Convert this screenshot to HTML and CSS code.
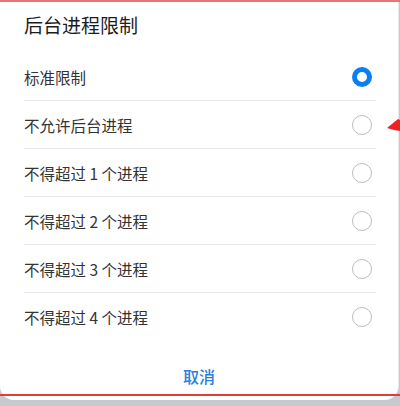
FILE: index.html
```html
<!DOCTYPE html>
<html lang="zh">
<head>
<meta charset="utf-8">
<link rel="stylesheet" href="styles.css">
</head>
<body>
<div class="card">
  <div class="title">后台进程限制</div>
  <div class="list">
    <div class="row"><span>标准限制</span><span class="radio on"></span></div>
    <div class="row"><span>不允许后台进程</span><span class="radio"></span></div>
    <div class="row"><span>不得超过 1 个进程</span><span class="radio"></span></div>
    <div class="row"><span>不得超过 2 个进程</span><span class="radio"></span></div>
    <div class="row"><span>不得超过 3 个进程</span><span class="radio"></span></div>
    <div class="row"><span>不得超过 4 个进程</span><span class="radio"></span></div>
  </div>
  <div class="cancel">取消</div>
</div>
<div class="mark"></div>
<svg class="arrow" width="16" height="18" viewBox="0 0 16 18"><polygon points="3,12 14,3 16,4 16,15 10,14" fill="#ee2222"/></svg>
</body>
</html>
```
FILE: styles.css
```css
html, body {
  margin: 0;
  padding: 0;
}
body {
  width: 400px;
  height: 406px;
  background: #c6c9cd;
  position: relative;
  overflow: hidden;
  font-family: "Noto Sans CJK SC", "Noto Sans", sans-serif;
}
.card {
  width: 398px;
  height: 400px;
  background: #fff;
  border-radius: 0 0 14px 14px;
  box-shadow: 1px 0 0 #e9e9e9;
}
.title {
  height: 53px;
  line-height: 50px;
  padding-left: 24px;
  font-size: 19px;
  color: #1c1c1c;
}
.list {
  padding: 0 22px 0 24px;
}
.row {
  height: 47px;
  display: flex;
  align-items: center;
  justify-content: space-between;
  border-bottom: 1px solid #e7e7e7;
  font-size: 15.5px;
  color: #333;
}
.row:last-child {
  border-bottom: none;
}
.radio {
  width: 20px;
  height: 20px;
  box-sizing: border-box;
  border-radius: 50%;
  border: 1.5px solid #bdbdbd;
  margin-right: 4px;
}
.radio.on {
  border: 5px solid #0a7ef2;
}
.cancel {
  margin-top: 12px;
  height: 48px;
  line-height: 48px;
  text-align: center;
  font-size: 16px;
  font-weight: 500;
  color: #2a80d8;
}
.mark {
  position: absolute;
  left: 0;
  top: 0;
  width: 400px;
  height: 392px;
  border-top: 2px solid #e87474;
  border-bottom: 2px solid #e03e3e;
}
.arrow {
  position: absolute;
  left: 384px;
  top: 116px;
}
```
